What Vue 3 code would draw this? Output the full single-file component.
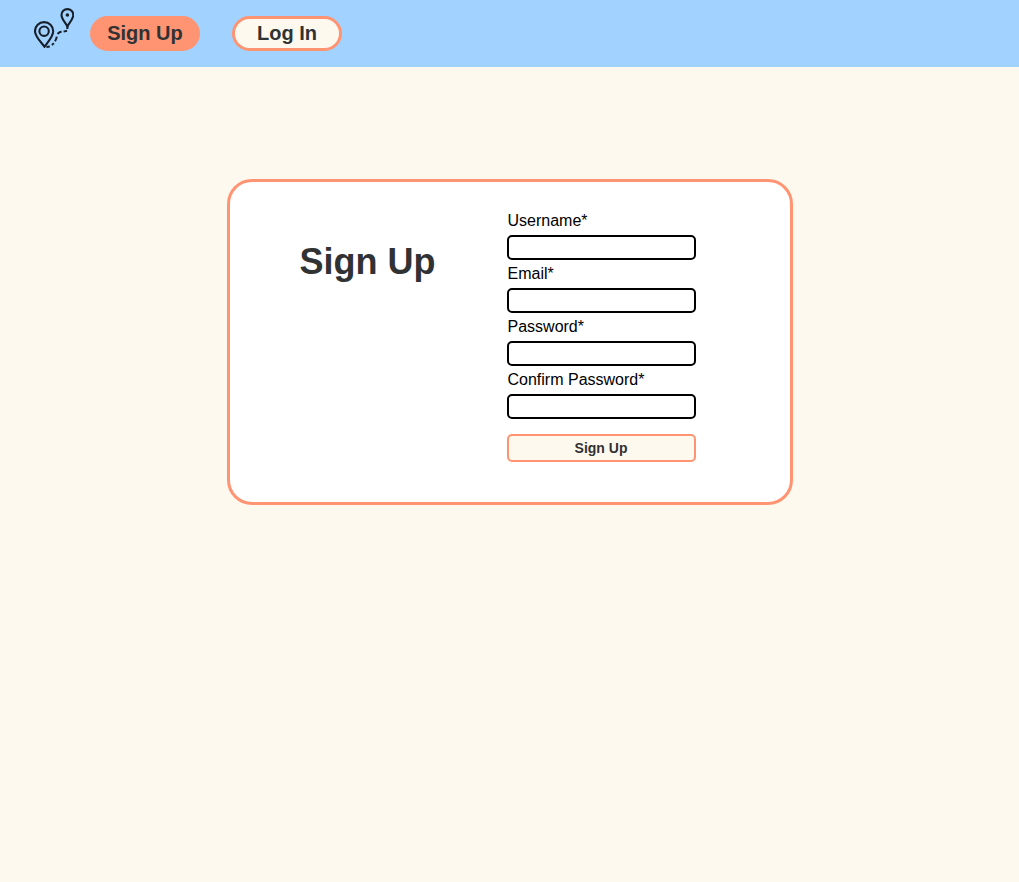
<script setup>
import { reactive } from 'vue'

const fields = [
  { id: 'username', label: 'Username*', type: 'text' },
  { id: 'email', label: 'Email*', type: 'email' },
  { id: 'password', label: 'Password*', type: 'password' },
  { id: 'confirm', label: 'Confirm Password*', type: 'password' }
]
const form = reactive({ username: '', email: '', password: '', confirm: '' })
</script>

<template>
  <div class="page">
    <header class="bar">
      <a class="logo" href="#" aria-label="Home">
        <svg viewBox="0 0 40 40" fill="none" stroke="#17202a" stroke-width="2.1">
          <path d="M10.5 38.8 C8.5 35.5 1 29 1 23.2 A9.1 9.1 0 0 1 19.2 23.2 C19.2 29 12.5 35.5 10.5 38.8 Z" />
          <circle cx="10.1" cy="23.2" r="4.7" />
          <path d="M33.4 18.5 C32.2 15.5 27.5 11.3 27.5 7 A5.9 5.9 0 0 1 39.3 7 C39.3 11.3 34.6 15.5 33.4 18.5 Z" />
          <circle cx="33.4" cy="7" r="1.8" fill="#17202a" stroke="none" />
          <path stroke-width="2" d="M33.4 18 V21 M33 22.8 L29.6 23.6 M27.6 23.8 Q24.6 24 23.8 26.2 M22.8 28.6 Q22.4 31 21 33.2 M19.8 35.2 L18 37.2 M15.8 38.6 L12.4 39" />
        </svg>
      </a>
      <nav class="links">
        <a class="pill active" href="#signup">Sign Up</a>
        <a class="pill" href="#login">Log In</a>
      </nav>
    </header>
    <main class="card">
      <h1>Sign Up</h1>
      <form @submit.prevent>
        <div v-for="field in fields" :key="field.id" class="field">
          <label :for="field.id">{{ field.label }}</label>
          <input :id="field.id" v-model="form[field.id]" :type="field.type" />
        </div>
        <button type="submit">Sign Up</button>
      </form>
    </main>
  </div>
</template>

<style>
body {
  background: #fef9ef;
}
</style>

<style scoped>
.page {
  min-height: 100vh;
  font-family: "Liberation Sans", Arial, sans-serif;
  color: #000;
}
.bar {
  box-sizing: border-box;
  height: 67px;
  padding: 8px 34px;
  display: flex;
  align-items: flex-start;
  gap: 16px;
  background: #a2d2ff;
}
.logo,
.logo svg {
  display: block;
  width: 40px;
  height: 40px;
}
.links {
  display: flex;
  gap: 32px;
  padding-top: 8px;
}
.pill {
  box-sizing: border-box;
  width: 110px;
  border: 3px solid #ff9473;
  border-radius: 20px;
  background: #fef9ef;
  color: #303234;
  font-size: 20px;
  font-weight: bold;
  line-height: 29px;
  text-align: center;
  text-decoration: none;
}
.active {
  background: #ff9473;
}
.card {
  box-sizing: border-box;
  width: 566px;
  max-width: 100%;
  margin: 112px auto 0;
  padding: 28px 94px 40px 70px;
  display: flex;
  justify-content: space-between;
  align-items: flex-start;
  border: 3px solid #ff9473;
  border-radius: 25px;
  background: #fff;
}
h1 {
  margin: 30px 0 0;
  color: #303234;
  font-size: 36px;
  line-height: 44px;
}
form {
  width: 189px;
  display: flex;
  flex-direction: column;
}
.field {
  display: flex;
  flex-direction: column;
  gap: 4px;
  margin-bottom: 3px;
}
label {
  padding-left: 1px;
  font-size: 16px;
  line-height: 21px;
}
input {
  box-sizing: border-box;
  width: 100%;
  height: 25px;
  padding: 1px 4px;
  border: 2px solid #000;
  border-radius: 5px;
  background: #fff;
  font: inherit;
}
button {
  height: 28px;
  margin-top: 12px;
  padding: 0;
  border: 2px solid #ff9473;
  border-radius: 5px;
  background: #fef9ef;
  color: #303234;
  font-family: inherit;
  font-size: 14px;
  font-weight: bold;
}
</style>
